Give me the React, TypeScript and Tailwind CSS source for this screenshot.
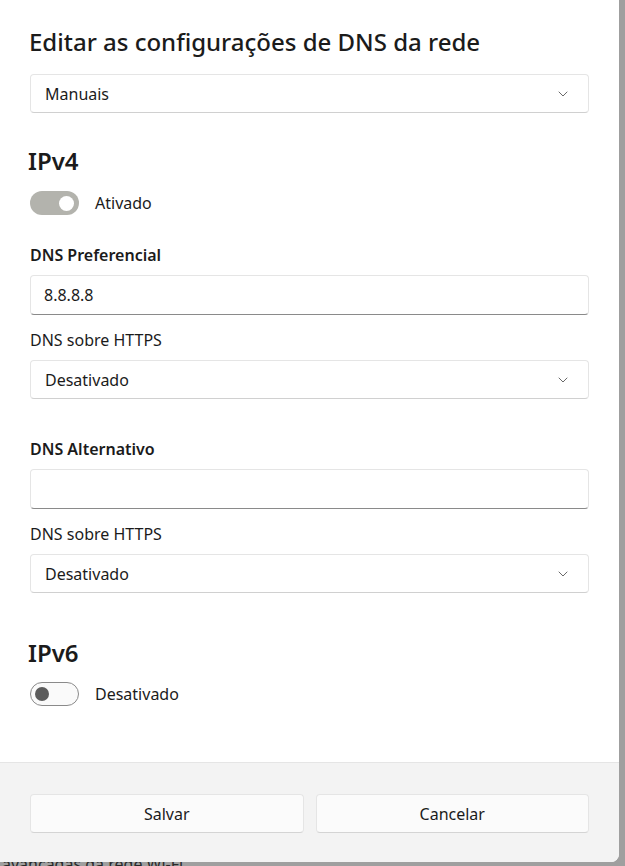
import { ChevronDown } from 'lucide-react';

function Select({ value }: { value: string }) {
  return (
    <div className="flex items-center justify-between h-[39px] rounded-[4px] border border-[#e5e5e5] border-b-[#d0d0d0] bg-white pl-[14px] pr-[17px]">
      <span className="text-[16px] text-[#1b1b1b]">{value}</span>
      <ChevronDown className="w-[16px] h-[16px] text-[#4a4a4a]" strokeWidth={1.25} />
    </div>
  );
}

function TextInput({ value }: { value: string }) {
  return (
    <div className="flex items-center h-[40px] rounded-[4px] border border-[#e5e5e5] border-b-[#8a8a8a] bg-white px-[13px]">
      <span className="text-[16px] text-[#1b1b1b]">{value}</span>
    </div>
  );
}

function Toggle({ on, label }: { on: boolean; label: string }) {
  return (
    <div className="flex items-center gap-[16px]">
      {on ? (
        <div className="flex items-center justify-end w-[49px] h-[24px] rounded-full bg-[#b3b3ad] pr-[5px]">
          <div className="w-[15px] h-[15px] rounded-full bg-white" />
        </div>
      ) : (
        <div className="flex items-center w-[49px] h-[24px] rounded-full border border-[#8a8a8a] bg-[#fafafa] pl-[4px]">
          <div className="w-[14px] h-[14px] rounded-full bg-[#5c5c5c]" />
        </div>
      )}
      <span className="text-[16px] text-[#1b1b1b]">{label}</span>
    </div>
  );
}

export default function App() {
  return (
    <div className="w-[625px] h-[866px] bg-[#9f9f9f] overflow-hidden font-['Noto_Sans',sans-serif]">
      <div className="flex">
        <div className="w-[619px] h-[862px] bg-white rounded-br-[8px] overflow-hidden flex flex-col">
          <div className="flex-1 px-[30px] pt-[26px]">
            <h1 className="text-[24px] font-medium text-[#1b1b1b] leading-[32px] -ml-[1px]">
              Editar as configurações de DNS da rede
            </h1>
            <div className="mt-[16px]">
              <Select value="Manuais" />
            </div>

            <h2 className="mt-[34px] text-[24px] font-semibold text-[#1b1b1b] leading-[28px] -ml-[2px]">IPv4</h2>
            <div className="mt-[16px]">
              <Toggle on label="Ativado" />
            </div>

            <div className="mt-[29px] text-[16px] font-semibold text-[#1b1b1b] leading-[22px]">DNS Preferencial</div>
            <div className="mt-[9px]">
              <TextInput value="8.8.8.8" />
            </div>
            <div className="mt-[14px] text-[16px] text-[#1b1b1b] leading-[22px]">DNS sobre HTTPS</div>
            <div className="mt-[9px]">
              <Select value="Desativado" />
            </div>

            <div className="mt-[39px] text-[16px] font-semibold text-[#1b1b1b] leading-[22px]">DNS Alternativo</div>
            <div className="mt-[9px]">
              <TextInput value="" />
            </div>
            <div className="mt-[14px] text-[16px] text-[#1b1b1b] leading-[22px]">DNS sobre HTTPS</div>
            <div className="mt-[9px]">
              <Select value="Desativado" />
            </div>

            <h2 className="mt-[46px] text-[24px] font-semibold text-[#1b1b1b] leading-[28px] -ml-[2px]">IPv6</h2>
            <div className="mt-[15px]">
              <Toggle on={false} label="Desativado" />
            </div>
          </div>

          <div className="h-[100px] border-t border-[#e5e5e5] bg-[#f3f3f3] px-[30px] pt-[31px]">
            <div className="grid grid-cols-2 gap-[12px]">
              <button className="h-[39px] rounded-[4px] border border-[#e5e5e5] border-b-[#d4d4d4] bg-[#fbfbfb] text-[16px] text-[#1b1b1b]">
                Salvar
              </button>
              <button className="h-[39px] rounded-[4px] border border-[#e5e5e5] border-b-[#d4d4d4] bg-[#fbfbfb] text-[16px] text-[#1b1b1b]">
                Cancelar
              </button>
            </div>
          </div>
        </div>
        <div className="flex-1" />
      </div>
      <div className="h-[4px] overflow-hidden pl-[2px]">
        <div className="-mt-[8px] text-[16px] leading-[20px] text-[#2a2a2a]">avançadas da rede Wi-Fi</div>
      </div>
    </div>
  );
}
